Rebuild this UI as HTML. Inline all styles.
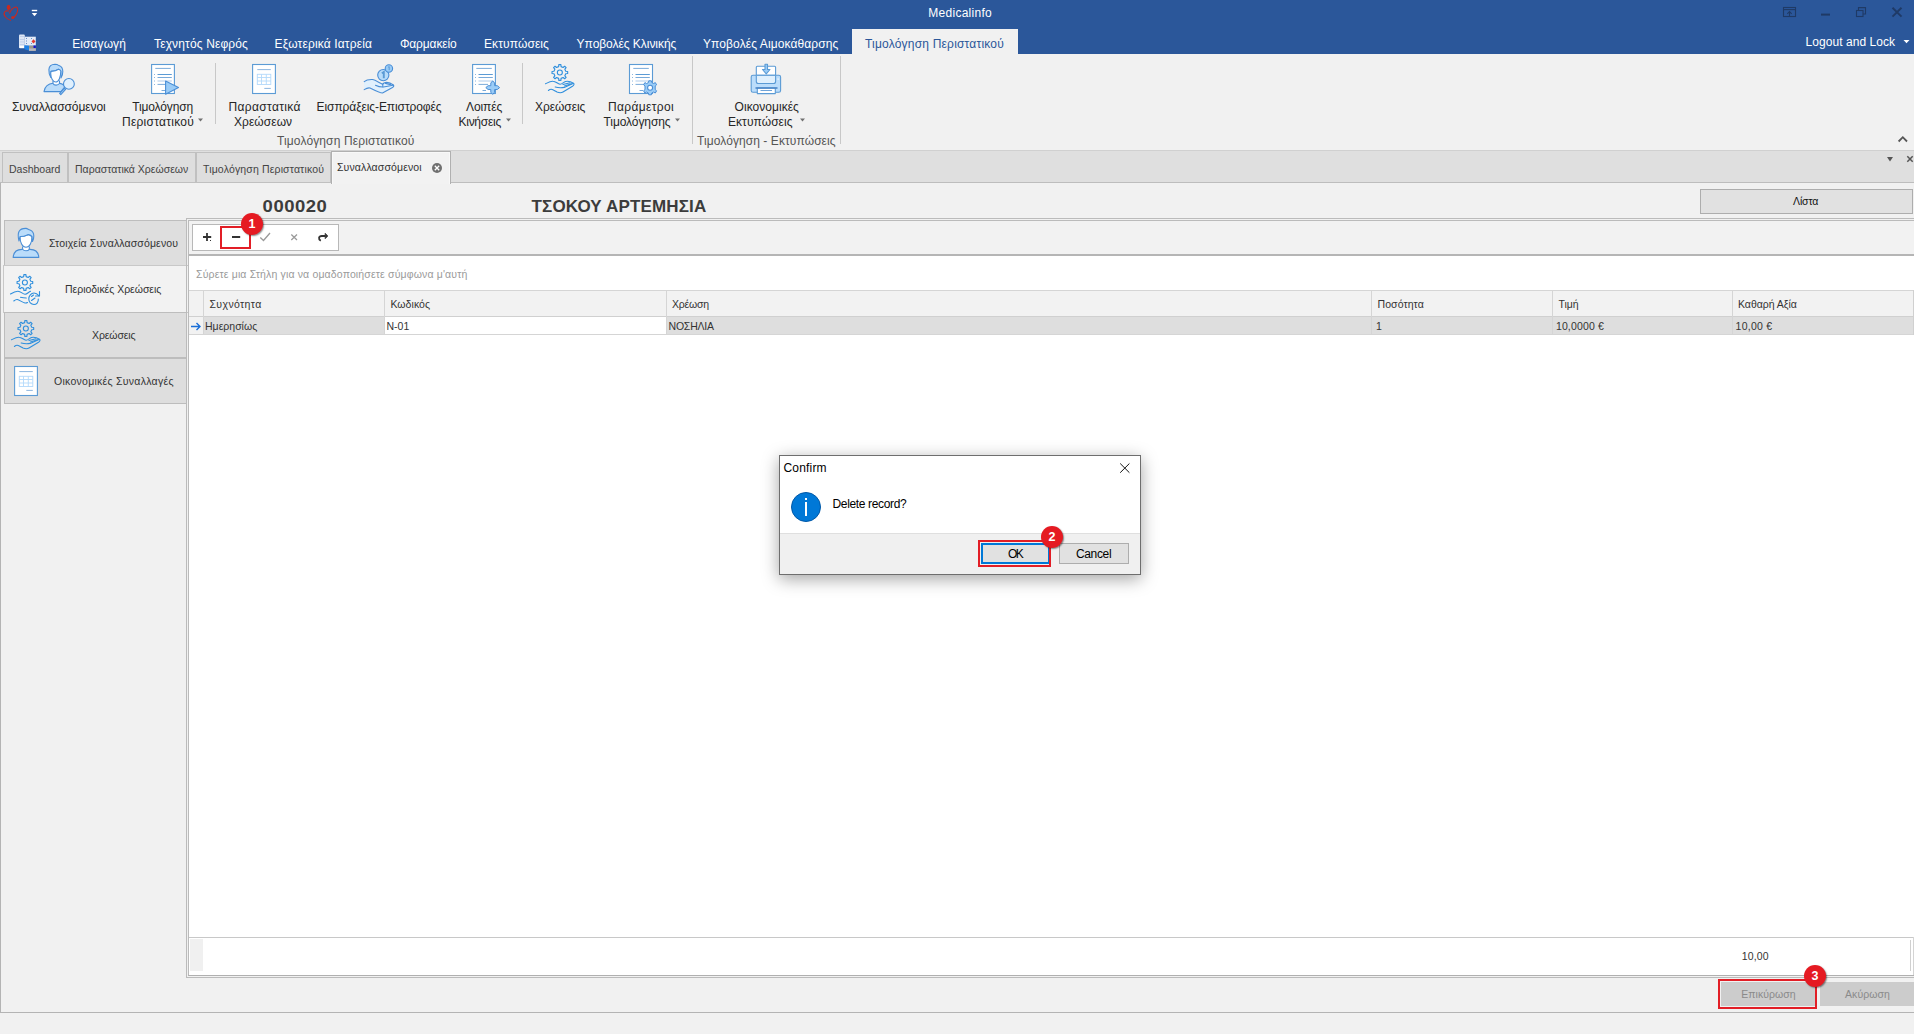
<!DOCTYPE html>
<html><head><meta charset="utf-8">
<style>
*{box-sizing:border-box}
html,body{margin:0;padding:0}
body{width:1914px;height:1034px;position:relative;overflow:hidden;background:#F1F1F1;font-family:"Liberation Sans",sans-serif;color:#222}
.a{position:absolute}
.t{position:absolute;white-space:pre;line-height:1}
.rb{font-size:12px;color:#262626}
.tb{font-size:12px;color:#fff}
.c{font-size:10.5px;color:#333}
svg{position:absolute;overflow:visible}
</style></head><body>

<!-- title bar + ribbon tabs -->
<div class="a" style="left:0;top:0;width:1914px;height:54px;background:#2B579A"></div>
<div class="t tb" style="left:928.3px;top:7px;letter-spacing:0.27px">Medicalinfo</div>
<div class="t tb" style="left:72.3px;top:38px;letter-spacing:0.07px">Εισαγωγή</div>
<div class="t tb" style="left:154px;top:38px;letter-spacing:0.14px">Τεχνητός Νεφρός</div>
<div class="t tb" style="left:274.5px;top:38px;letter-spacing:0.15px">Εξωτερικά Ιατρεία</div>
<div class="t tb" style="left:399.9px;top:38px;letter-spacing:-0.14px">Φαρμακείο</div>
<div class="t tb" style="left:484px;top:38px;letter-spacing:0.1px">Εκτυπώσεις</div>
<div class="t tb" style="left:576.6px;top:38px;letter-spacing:-0.04px">Υποβολές Κλινικής</div>
<div class="t tb" style="left:703px;top:38px;letter-spacing:0.1px">Υποβολές Αιμοκάθαρσης</div>
<div class="a" style="left:852px;top:29px;width:166px;height:26px;background:#F1F1F1"></div>
<div class="t tb" style="left:865px;top:38px;color:#2B579A;letter-spacing:0.2px">Τιμολόγηση Περιστατικού</div>
<div class="t tb" style="left:1805.5px;top:36px;letter-spacing:0.06px">Logout and Lock</div>

<!-- title icons -->
<svg style="left:0;top:0" width="48" height="27" viewBox="0 0 48 27">
 <ellipse cx="8.6" cy="7.4" rx="1.9" ry="2.6" fill="#C62A22"/>
 <path d="M9.2 11.2 C8 10.5 5.5 10.8 4.6 12 C3.8 13.2 4.2 15.5 5.5 17 C7 18.8 9.5 20 11 20.5" fill="none" stroke="#C62A22" stroke-width="1.1"/>
 <path d="M9.5 13.5 C10.5 10.5 12.5 8 15 7.2 C17.5 6.6 18 8.5 17.6 11 C17.2 13.5 15.5 16 13.5 18" fill="none" stroke="#C62A22" stroke-width="1.1"/>
 <circle cx="12.7" cy="17.6" r="1.5" fill="#C62A22"/>
 <rect x="31.8" y="9.8" width="5.4" height="1.4" fill="#fff"/>
 <path d="M31.8 13 L37.2 13 L34.5 16.2 Z" fill="#fff"/>
</svg>
<svg style="left:14px;top:30px" width="28" height="24" viewBox="0 0 28 24">
 <rect x="5" y="4.6" width="5.8" height="13.6" rx="1" fill="#DDE6F5"/><g fill="#B7C6E6"><rect x="5.8" y="6.2" width="4.2" height="0.7"/><rect x="5.8" y="9" width="4.2" height="0.7"/><rect x="5.8" y="11.6" width="4.2" height="0.7"/><rect x="5.8" y="14.2" width="4.2" height="0.7"/></g><rect x="5.6" y="16" width="4.6" height="2" fill="#fff"/>
 <rect x="10.8" y="6.7" width="11" height="9" fill="#E3EBF8"/>
 <g fill="#6C8FC8"><rect x="12" y="8" width="1" height="1"/><rect x="12" y="10.5" width="1" height="1"/><rect x="12" y="13" width="1" height="1"/><rect x="17" y="8" width="1" height="1"/><rect x="17" y="13" width="1" height="1"/></g>
 <path d="M17.5 11.4 L19.5 9.2 L21.5 11.4 L19.5 13.6 Z" fill="#E23A30"/>
 <path d="M10.3 15.2 L15 15.8 L15 20.5 L10.3 19.2 Z" fill="#1C7FE6"/>
 <rect x="15" y="15.8" width="6.8" height="5" fill="#9A958A"/><rect x="15" y="18.5" width="6.8" height="2.3" fill="#B8B8C0"/>
 <rect x="19.5" y="15.5" width="2.3" height="2.5" fill="#1010D0"/>
</svg>
<svg style="left:1783px;top:7px" width="120" height="11" viewBox="0 0 120 11">
 <g fill="none" stroke="#1F3A66" stroke-width="1.1">
  <rect x="0.5" y="0.5" width="12" height="9"/><line x1="0.5" y1="2.6" x2="12.5" y2="2.6"/>
  <path d="M6.5 9.5 V4.8 M4.3 6.8 L6.5 4.6 L8.7 6.8"/>
  <rect x="73.5" y="3.5" width="6.5" height="6"/><path d="M75.5 3.5 V0.6 H82.5 V7 H80"/>
  <path d="M109.5 0.8 L118.5 9.6 M118.5 0.8 L109.5 9.6" stroke-width="1.9"/>
 </g>
 <rect x="38" y="6.6" width="9" height="2" fill="#1F3A66"/>
</svg>
<svg style="left:1903px;top:39px" width="8" height="6" viewBox="0 0 8 6"><path d="M0.5 1 L6.5 1 L3.5 4.2 Z" fill="#fff"/></svg>

<!-- ribbon -->
<!-- ribbon icons -->
<svg style="left:40px;top:60px" width="40" height="38" viewBox="0 0 40 38">
 <g stroke="#4A8ED6" stroke-width="1.1" stroke-linejoin="round">
  <path d="M4 31.6 C4.5 26.5 8.5 23.5 13 23.2 L19 23.2 C22 23.4 24 25 25 26.5 L21 31.6 Z" fill="#BADCFA"/>
  <path d="M13 20.5 L13 23.5 C14 25.6 18 25.6 19.5 23.5 L19.5 20.5" fill="#fff"/>
  <path d="M10.8 17.5 C9.3 15.5 8.8 12.5 8.9 9.5 C9.1 6.5 11.5 4.4 15 4.3 C16.8 4.3 17.8 4.8 19 5.6 C21.5 6.5 22.8 8.5 22.8 11.5 C22.8 14 22.4 16 21 18 L20.8 11 C20 9.8 19.2 9.2 18.5 9.3 C17 10.5 15 11.3 11 11.4 Z" fill="#BADCFA"/>
  <path d="M11 11.4 C15 11.3 17 10.5 18.5 9.3 C19.5 9.6 20.4 10.4 20.8 11 C20.8 17.5 18.5 22 15.8 22 C13 22 10.8 18 10.7 13.5 Z" fill="#fff"/>
  <circle cx="28.9" cy="23.9" r="5.4" fill="#E0F0FD"/>
  <path d="M24.4 28.2 L19.6 33.4 L20.8 34.6 L25.6 29.4 Z" fill="#9ACCF7"/>
 </g>
</svg>
<svg style="left:145px;top:60px" width="40" height="38" viewBox="0 0 40 38">
 <rect x="6.6" y="4.5" width="22.8" height="29" fill="#fff" stroke="#5B9BD5" stroke-width="1.1"/>
 <g stroke="#7AAAD9" stroke-width="1"><line x1="10.3" y1="8.4" x2="25.8" y2="8.4"/><line x1="12.5" y1="14.5" x2="26.8" y2="14.5" stroke="#5B9BD5"/><line x1="12.5" y1="17.5" x2="26.8" y2="17.5"/><line x1="12.5" y1="21" x2="26.8" y2="21" stroke="#AFCBEA"/><line x1="12.5" y1="24.4" x2="22" y2="24.4"/><line x1="16.5" y1="30.5" x2="20.5" y2="30.5"/></g>
 <g fill="#8DB6DF"><rect x="9" y="14" width="1" height="1"/><rect x="9" y="17" width="1" height="1"/><rect x="9" y="20.5" width="1" height="1"/><rect x="9" y="24" width="1" height="1"/></g>
 <path d="M20.6 21 L33.5 27.6 L20.6 34.3 Z" fill="#9ACCF7" stroke="#4A8ED6" stroke-width="1.1" stroke-linejoin="round"/>
</svg>
<svg style="left:244px;top:60px" width="40" height="38" viewBox="0 0 40 38" id="ic-doctab">
 <rect x="8.6" y="4.5" width="22.8" height="29" fill="#fff" stroke="#5B9BD5" stroke-width="1.1"/>
 <g stroke="#8DB6DF" stroke-width="1"><line x1="13.3" y1="9.6" x2="26.8" y2="9.6"/><line x1="20.3" y1="28.4" x2="26.8" y2="28.4"/></g>
 <g stroke="#B3D9FB" stroke-width="0.9" fill="none"><rect x="13.3" y="14.3" width="13.5" height="10.2"/><line x1="13.3" y1="17.5" x2="26.8" y2="17.5"/><line x1="13.3" y1="21" x2="26.8" y2="21"/><line x1="17.5" y1="14.3" x2="17.5" y2="24.5"/><line x1="22.3" y1="14.3" x2="22.3" y2="24.5"/></g>
</svg>
<svg style="left:360px;top:60px" width="40" height="38" viewBox="0 0 40 38">
 <path d="M4 21.5 C6 20 8 19.3 12.5 19.5 C15 19.8 19 22.5 22.5 24.2 L24 23 C26 22 30 22.5 33.5 25 C34 26 33.5 27 32.5 27.5 L22.5 33 C20 33 14 30 10 28 C8 27.5 6 28.5 4 29.5 Z" fill="#E0F0FD"/>
 <g stroke="#4A8ED6" stroke-width="1.1" stroke-linejoin="round" fill="none" stroke-linecap="round">
  <path d="M4.2 21.6 C6 20 8 19.3 12.5 19.5 C15 19.8 19 22.5 22.5 24.2 L24 23 C26 22 30 22.5 33.5 25 C34 26 33.5 27 32.5 27.5 L22.5 33 C20 33 14 30 10 28 C8 27.5 6 28.5 4.2 29.6"/>
  <path d="M15.5 25.2 C18 26.5 20 27.2 23.5 27 L33 25.3"/>
  <path d="M22.8 24.3 V26.8 M25.5 23.4 L30.5 24.6"/>
 </g>
 <g stroke="#4A8ED6" stroke-width="1.1">
  <circle cx="23.3" cy="15.1" r="5.6" fill="#B8DCFA"/>
  <circle cx="28.9" cy="8.5" r="3.7" fill="#9ACCF7"/>
 </g>
 <path d="M21.8 13.2 L23.8 12 L23.8 18.3" stroke="#5B9BD5" stroke-width="1.9" fill="none"/>
 <path d="M28.2 7.2 L29.2 6.6 V10.2" stroke="#5B9BD5" stroke-width="1" fill="none"/>
</svg>
<svg style="left:466px;top:60px" width="40" height="38" viewBox="0 0 40 38">
 <rect x="6.6" y="4.5" width="22.8" height="29" fill="#fff" stroke="#5B9BD5" stroke-width="1.1"/>
 <g stroke="#7AAAD9" stroke-width="1"><line x1="10.3" y1="8.4" x2="25.8" y2="8.4"/><line x1="12.5" y1="14.5" x2="26.8" y2="14.5" stroke="#5B9BD5"/><line x1="12.5" y1="17.5" x2="26.8" y2="17.5"/><line x1="12.5" y1="21" x2="26.8" y2="21" stroke="#AFCBEA"/><line x1="12.5" y1="24.4" x2="22" y2="24.4"/><line x1="16.5" y1="30.5" x2="20" y2="30.5"/></g>
 <g fill="#8DB6DF"><rect x="9" y="14" width="1" height="1"/><rect x="9" y="17" width="1" height="1"/><rect x="9" y="20.5" width="1" height="1"/><rect x="9" y="24" width="1" height="1"/></g>
 <path d="M26.7 20.8 L28.6 23 V25.7 H31.3 L33.6 27.6 L31.3 29.5 H28.6 V32.2 L26.7 34.4 L24.8 32.2 V29.5 H22.1 L19.8 27.6 L22.1 25.7 H24.8 V23 Z" fill="#9ACCF7" stroke="#4A8ED6" stroke-width="1" stroke-linejoin="round"/>
</svg>
<svg style="left:540px;top:60px" width="40" height="38" viewBox="0 0 40 38" id="ic-gearhand">
 <g fill="none" stroke="#2F8FDD" stroke-width="1.1" stroke-linejoin="round" stroke-linecap="round">
  <path id="gearp" d="M18.63 6.62 L18.80 4.67 L20.90 4.67 L21.07 6.62 L23.14 7.49 L24.64 6.22 L26.13 7.71 L24.86 9.21 L25.73 11.28 L27.68 11.45 L27.68 13.55 L25.73 13.72 L24.86 15.79 L26.13 17.29 L24.64 18.78 L23.14 17.51 L21.07 18.38 L20.90 20.33 L18.80 20.33 L18.63 18.38 L16.56 17.51 L15.06 18.78 L13.57 17.29 L14.84 15.79 L13.97 13.72 L12.02 13.55 L12.02 11.45 L13.97 11.28 L14.84 9.21 L13.57 7.71 L15.06 6.22 L16.56 7.49 Z"/>
  <circle cx="19.85" cy="12.5" r="2.5"/>
  <path d="M5.5 23.8 C8 22.5 10.5 21 13 21.2 C16 21.3 17.5 23.9 20 24.2 C22 24.4 23.5 22 25.5 21.5 C28 21 31.5 22 33.5 23.2 C34.5 24 34 25.2 32.5 26.2 L23 32 C21 33.2 19.5 33 17 32 C15 31 13 29.5 11.3 29.3 C10 29.2 9 30 8.4 30.5"/>
  <path d="M15.2 27 C18 27.8 21 28 24.2 27.4 L33 23.5"/>
  <path d="M23 24.5 L30 22.8 M24.5 26 L31.5 23.8"/>
 </g>
</svg>
<svg style="left:622px;top:60px" width="40" height="38" viewBox="0 0 40 38">
 <rect x="7.5" y="4.5" width="23" height="29" fill="#fff" stroke="#5B9BD5" stroke-width="1.1"/>
 <g stroke="#7AAAD9" stroke-width="1"><line x1="11.3" y1="8.4" x2="26.8" y2="8.4"/><line x1="13.5" y1="14.5" x2="27.8" y2="14.5" stroke="#5B9BD5"/><line x1="13.5" y1="17.5" x2="27.8" y2="17.5"/><line x1="13.5" y1="21" x2="27.8" y2="21" stroke="#AFCBEA"/><line x1="13.5" y1="24.4" x2="22" y2="24.4"/><line x1="17.5" y1="30.5" x2="21" y2="30.5"/></g>
 <g fill="#8DB6DF"><rect x="10" y="14" width="1" height="1"/><rect x="10" y="17" width="1" height="1"/><rect x="10" y="20.5" width="1" height="1"/><rect x="10" y="24" width="1" height="1"/></g>
 <path d="M26.8 20.8 H29.4 L29.8 22.6 L31.6 23.5 L33.3 22.6 L34.6 24.8 L33.2 26 V29.6 L34.6 30.8 L33.3 33 L31.6 32.1 L29.8 33 L29.4 34.8 H26.8 L26.4 33 L24.6 32.1 L22.9 33 L21.6 30.8 L23 29.6 V26 L21.6 24.8 L22.9 22.6 L24.6 23.5 L26.4 22.6 Z" fill="#9ACCF7" stroke="#4A8ED6" stroke-width="1" stroke-linejoin="round"/>
 <circle cx="28.1" cy="27.8" r="2.5" fill="#fff" stroke="#4A8ED6" stroke-width="1.1"/>
</svg>
<svg style="left:746px;top:60px" width="40" height="38" viewBox="0 0 40 38">
 <g stroke="#5B9BD5" stroke-width="1.1" stroke-linejoin="round">
  <rect x="10.3" y="6.3" width="19.3" height="12" rx="1" fill="#fff"/>
  <rect x="5.2" y="15.3" width="29.4" height="17" rx="1.8" fill="#BBDDFB"/>
  <path d="M10.3 15.3 V21.5 C10.3 22.8 11 23.5 12.3 23.5 H27.6 C28.9 23.5 29.6 22.8 29.6 21.5 V15.3" fill="#E0F0FD"/>
  <line x1="10.3" y1="15.3" x2="29.6" y2="15.3"/>
  <rect x="11.3" y="28" width="18" height="5.6" fill="#fff"/>
  <path d="M19 4.2 H21.5 V9.5 H24 L20.25 13.8 L16.5 9.5 H19 Z" fill="#9ACCF7"/>
 </g>
 <line x1="9.5" y1="28" x2="31.5" y2="28" stroke="#4A86C8" stroke-width="1.6"/>
 <line x1="14.5" y1="30.5" x2="26" y2="30.5" stroke="#6FA3D8" stroke-width="1"/>
 <rect x="31.5" y="18.5" width="1.2" height="1.2" fill="#fff"/>
</svg>
<!-- dropdown arrows ribbon -->
<svg style="left:0;top:54px" width="900" height="96" viewBox="0 0 900 96">
 <g fill="#707070"><path d="M198 64.5 H203 L200.5 67.5 Z"/><path d="M506 64.5 H511 L508.5 67.5 Z"/><path d="M675 64.5 H680 L677.5 67.5 Z"/><path d="M800 64.5 H805 L802.5 67.5 Z"/></g>
</svg>
<svg style="left:1896px;top:134px" width="14" height="10" viewBox="0 0 14 10"><path d="M2.6 7.5 L6.8 3.2 L11 7.5" fill="none" stroke="#555" stroke-width="1.8"/></svg>

<div class="t rb" style="left:12px;top:101px;letter-spacing:-0.07px">Συναλλασσόμενοι</div>
<div class="t rb" style="left:132.2px;top:101px;letter-spacing:-0.12px">Τιμολόγηση</div>
<div class="t rb" style="left:122px;top:116px;letter-spacing:0.26px">Περιστατικού</div>
<div class="a" style="left:215px;top:63px;width:1px;height:61px;background:#C8C8C8"></div>
<div class="t rb" style="left:228.5px;top:101px;letter-spacing:0.34px">Παραστατικά</div>
<div class="t rb" style="left:234px;top:116px;letter-spacing:0.06px">Χρεώσεων</div>
<div class="t rb" style="left:316.6px;top:101px;letter-spacing:-0.09px">Εισπράξεις-Επιστροφές</div>
<div class="t rb" style="left:466px;top:101px;letter-spacing:-0.08px">Λοιπές</div>
<div class="t rb" style="left:458.5px;top:116px;letter-spacing:-0.27px">Κινήσεις</div>
<div class="a" style="left:522px;top:63px;width:1px;height:61px;background:#C8C8C8"></div>
<div class="t rb" style="left:535px;top:101px;letter-spacing:-0.06px">Χρεώσεις</div>
<div class="t rb" style="left:608px;top:101px;letter-spacing:0.34px">Παράμετροι</div>
<div class="t rb" style="left:603.5px;top:116px;letter-spacing:-0.08px">Τιμολόγησης</div>
<div class="t rb" style="left:277px;top:135px;color:#555;letter-spacing:0.13px">Τιμολόγηση Περιστατικού</div>
<div class="a" style="left:692px;top:56px;width:1px;height:88px;background:#C8C8C8"></div>
<div class="t rb" style="left:734.6px;top:101px;letter-spacing:0.04px">Οικονομικές</div>
<div class="t rb" style="left:728px;top:116px;letter-spacing:0.06px">Εκτυπώσεις</div>
<div class="t rb" style="left:697px;top:135px;color:#555;letter-spacing:0.08px">Τιμολόγηση - Εκτυπώσεις</div>
<div class="a" style="left:840px;top:56px;width:1px;height:88px;background:#C8C8C8"></div>

<!-- doc tab strip -->
<div class="a" style="left:0;top:150px;width:1914px;height:33px;background:#DFDFDF;border-top:1px solid #D0D0D0;border-bottom:1px solid #BDBDBD"></div>
<div class="a" style="left:2px;top:152px;width:66px;height:31px;background:#DEDEDE;border:1px solid #C0C0C0"></div>
<div class="a" style="left:68px;top:152px;width:128px;height:31px;background:#DEDEDE;border:1px solid #C0C0C0"></div>
<div class="a" style="left:196px;top:152px;width:135px;height:31px;background:#DEDEDE;border:1px solid #C0C0C0"></div>
<div class="a" style="left:331px;top:151px;width:120px;height:33px;background:#F2F2F2;border:1px solid #B0B0B0;border-bottom:none;box-shadow:inset 1px 1px 0 #F8F8F8, inset -1px 0 0 #F8F8F8"></div>
<div class="t c" style="left:9px;top:164px;color:#444">Dashboard</div>
<div class="t c" style="left:75px;top:164px;color:#444">Παραστατικά Χρεώσεων</div>
<div class="t c" style="left:203px;top:164px;color:#444;letter-spacing:0.15px">Τιμολόγηση Περιστατικού</div>
<div class="t c" style="left:337px;top:162px;color:#333;letter-spacing:0.12px">Συναλλασσόμενοι</div>
<svg style="left:431px;top:162px" width="12" height="12" viewBox="0 0 12 12"><circle cx="6" cy="6" r="5" fill="#707070"/><path d="M3.8 3.8 L8.2 8.2 M8.2 3.8 L3.8 8.2" stroke="#fff" stroke-width="1.3"/></svg>
<svg style="left:1885px;top:154px" width="30" height="12" viewBox="0 0 30 12"><path d="M2 3 H8 L5 7.5 Z" fill="#555"/><path d="M22.3 2.3 L27.7 7.7 M27.7 2.3 L22.3 7.7" stroke="#555" stroke-width="1.5"/></svg>

<!-- content frame -->
<div class="a" style="left:0;top:183px;width:1914px;height:830px;border-left:1px solid #B4B4B4;border-bottom:1px solid #B4B4B4"></div>

<div class="t" style="left:262.6px;top:198px;font-size:18.5px;font-weight:bold;color:#3C3C3C;letter-spacing:0.5px;transform:scaleY(0.9);transform-origin:0 0">000020</div>
<div class="t" style="left:531.5px;top:198px;font-size:17px;font-weight:bold;color:#3C3C3C;letter-spacing:0.15px">ΤΣΟΚΟΥ ΑΡΤΕΜΗΣΙΑ</div>
<div class="a" style="left:1700px;top:189px;width:213px;height:25px;background:#E1E1E1;border:1px solid #ADADAD"></div>
<div class="t c" style="left:1793px;top:196px;color:#111;letter-spacing:-0.12px">Λίστα</div>

<!-- nav -->
<div class="a" style="left:4px;top:220px;width:183px;height:46px;background:#DEDEDE;border:1px solid #BDBDBD"></div>
<div class="a" style="left:3px;top:265px;width:185px;height:48px;background:#F2F2F2;border:1px solid #C8C8C8;border-right:none"></div>
<div class="a" style="left:4px;top:312px;width:183px;height:46px;background:#DEDEDE;border:1px solid #BDBDBD"></div>
<div class="a" style="left:4px;top:358px;width:183px;height:46px;background:#DEDEDE;border:1px solid #BDBDBD"></div>
<div class="t c" style="left:49px;top:238px;letter-spacing:0.13px">Στοιχεία Συναλλασσόμενου</div>
<div class="t c" style="left:65px;top:284px;letter-spacing:-0.03px">Περιοδικές Χρεώσεις</div>
<div class="t c" style="left:92px;top:330px;letter-spacing:-0.11px">Χρεώσεις</div>
<div class="t c" style="left:54px;top:376px;letter-spacing:0.27px">Οικονομικές Συναλλαγές</div>


<!-- nav icons -->
<svg style="left:8px;top:224px" width="36" height="38" viewBox="0 0 36 38">
 <g stroke="#4A8ED6" stroke-width="1.1" stroke-linejoin="round">
  <path d="M5.2 33.4 C5.5 28.5 9 25.5 14 25.4 L22 25.4 C27 25.5 30.5 28.5 30.8 33.4 Z" fill="#BADCFA"/>
  <path d="M14.6 22.5 L14.6 25.2 C16 27.3 20 27.3 21.3 25.2 L21.3 22.5" fill="#fff"/>
  <path d="M12 12.5 C12 19 14.5 23.3 18 23.3 C21.5 23.3 24 19 24 12.5 C22 10.5 20.5 9.8 18.5 11.2 C16.5 12.3 14.5 12.6 12 12.5 Z" fill="#fff"/>
  <path d="M11 17 C10 13 10 9.5 11 7.5 C12.5 4.8 15 4.3 18 4.4 C19.5 4.6 20.5 5.6 22 6 C24.5 7 25.8 9.5 25.8 12 C25.8 14.5 25.3 16 24.5 17.5 L24 12.5 C22 10.5 20.5 9.8 18.5 11.2 C16.5 12.3 14.5 12.6 12 12.5 Z" fill="#BADCFA"/>
 </g>
</svg>
<svg style="left:6px;top:270px" width="38" height="38" viewBox="0 0 38 38">
 <g fill="none" stroke="#2F8FDD" stroke-width="1.1" stroke-linejoin="round" stroke-linecap="round">
  <g transform="translate(-0.95 0)"><path d="M18.63 6.62 L18.80 4.67 L20.90 4.67 L21.07 6.62 L23.14 7.49 L24.64 6.22 L26.13 7.71 L24.86 9.21 L25.73 11.28 L27.68 11.45 L27.68 13.55 L25.73 13.72 L24.86 15.79 L26.13 17.29 L24.64 18.78 L23.14 17.51 L21.07 18.38 L20.90 20.33 L18.80 20.33 L18.63 18.38 L16.56 17.51 L15.06 18.78 L13.57 17.29 L14.84 15.79 L13.97 13.72 L12.02 13.55 L12.02 11.45 L13.97 11.28 L14.84 9.21 L13.57 7.71 L15.06 6.22 L16.56 7.49 Z"/>
  <circle cx="19.85" cy="12.5" r="2.5"/></g>
  <path d="M4.5 24 C7 22.5 9.5 21.2 12 21.3 C15 21.4 16.5 24 19 24.3 C21 24.5 22.5 22 24.5 21.3"/>
  <path d="M14.5 27.3 C16.5 27.8 18.5 28 20.3 28"/>
  <path d="M7.8 31 C9 30 10 29.3 11.3 29.5 C13.5 30 16.5 32.5 19 33 C20 33.2 21 32.8 21.5 32.5"/>
  <path d="M32.3 29 C32.5 32.5 30.5 34.5 28 34.5 C25 34.5 22.8 32 22.8 29 C22.8 26 25 23 28 23 C30 23 31.5 24 33 25.8"/>
  <path d="M33.5 21.5 V26 H29.5"/>
  <path d="M25.5 26.5 L27.5 25 M25.5 30.5 L29 28"/>
 </g>
</svg>
<svg style="left:6px;top:316px" width="40" height="38" viewBox="0 0 40 38">
 <g fill="none" stroke="#2F8FDD" stroke-width="1.1" stroke-linejoin="round" stroke-linecap="round">
  <path d="M18.63 6.62 L18.80 4.67 L20.90 4.67 L21.07 6.62 L23.14 7.49 L24.64 6.22 L26.13 7.71 L24.86 9.21 L25.73 11.28 L27.68 11.45 L27.68 13.55 L25.73 13.72 L24.86 15.79 L26.13 17.29 L24.64 18.78 L23.14 17.51 L21.07 18.38 L20.90 20.33 L18.80 20.33 L18.63 18.38 L16.56 17.51 L15.06 18.78 L13.57 17.29 L14.84 15.79 L13.97 13.72 L12.02 13.55 L12.02 11.45 L13.97 11.28 L14.84 9.21 L13.57 7.71 L15.06 6.22 L16.56 7.49 Z"/>
  <circle cx="19.85" cy="12.5" r="2.5"/>
  <path d="M5.5 23.8 C8 22.5 10.5 21 13 21.2 C16 21.3 17.5 23.9 20 24.2 C22 24.4 23.5 22 25.5 21.5 C28 21 31.5 22 33.5 23.2 C34.5 24 34 25.2 32.5 26.2 L23 32 C21 33.2 19.5 33 17 32 C15 31 13 29.5 11.3 29.3 C10 29.2 9 30 8.4 30.5"/>
  <path d="M15.2 27 C18 27.8 21 28 24.2 27.4 L33 23.5"/>
  <path d="M23 24.5 L30 22.8 M24.5 26 L31.5 23.8"/>
 </g>
</svg>
<svg style="left:6px;top:362px" width="40" height="38" viewBox="0 0 40 38">
 <rect x="8.6" y="4.5" width="22.8" height="29" fill="#fff" stroke="#5B9BD5" stroke-width="1.1"/>
 <g stroke="#8DB6DF" stroke-width="1"><line x1="13.3" y1="9.6" x2="26.8" y2="9.6"/><line x1="20.3" y1="28.4" x2="26.8" y2="28.4"/></g>
 <g stroke="#B3D9FB" stroke-width="0.9" fill="none"><rect x="13.3" y="14.3" width="13.5" height="10.2"/><line x1="13.3" y1="17.5" x2="26.8" y2="17.5"/><line x1="13.3" y1="21" x2="26.8" y2="21"/><line x1="17.5" y1="14.3" x2="17.5" y2="24.5"/><line x1="22.3" y1="14.3" x2="22.3" y2="24.5"/></g>
</svg>

<!-- grid panel -->
<div class="a" style="left:186px;top:218px;width:1728px;height:760px;border:1px solid #BBBBBB;border-right:none"></div>
<div class="a" style="left:188px;top:220px;width:1726px;height:756px;border:1px solid #BBBBBB;border-right:none;border-bottom:2px solid #B0B0B0;background:#F2F2F2"></div>
<div class="a" style="left:189px;top:254px;width:1725px;height:2px;background:#B5B5B5"></div>
<div class="a" style="left:189px;top:256px;width:1725px;height:719px;background:#FFFFFF"></div>
<!-- toolbar -->
<div class="a" style="left:192px;top:224px;width:147px;height:27px;background:#FFFFFF;border:1px solid #B8B8B8"></div>


<!-- toolbar icons -->
<svg style="left:190px;top:224px" width="150" height="28" viewBox="0 0 150 28">
 <g stroke="#333" stroke-width="1.8" fill="none"><path d="M17 9 V17 M13 13 H21.2"/><path d="M42 13 H50.2" stroke-width="2"/><path d="M135.5 12 H131.8 C128.6 12 128 15.2 130.8 16.8" /></g>
 <rect x="20" y="16" width="1" height="1" fill="#333"/>
 <path d="M135.2 9.3 L137.8 12 L135.2 14.7 Z" fill="#333" stroke="#333" stroke-width="0.8" stroke-linejoin="round"/>
 <path d="M70.3 13.5 L73.5 16.5 L80 9" stroke="#9A9A9A" stroke-width="1.3" fill="none"/>
 <path d="M101.3 10.5 L107 16 M107 10.5 L101.3 16" stroke="#9A9A9A" stroke-width="1.3" fill="none"/>
</svg>
<div class="t c" style="left:196px;top:269px;color:#9A9A9A;letter-spacing:0.15px">Σύρετε μια Στήλη για να ομαδοποιήσετε σύμφωνα μ'αυτή</div>
<!-- header -->
<div class="a" style="left:189px;top:290px;width:1725px;height:27px;background:#F2F2F2;border-top:1px solid #D5D5D5;border-bottom:1px solid #D0D0D0"></div>
<div class="a" style="left:189px;top:317px;width:1725px;height:18px;background:#DEDEDE;border-bottom:1px solid #D5D5D5"></div>
<div class="a" style="left:384px;top:317px;width:282px;height:17px;background:#FFFFFF"></div>
<div class="a" style="left:189px;top:317px;width:14px;height:17px;background:#F2F2F2"></div>
<svg style="left:189px;top:320px" width="14" height="13" viewBox="0 0 14 13"><path d="M2 6.5 H11 M7.5 3 L11 6.5 L7.5 10" fill="none" stroke="#1A6FD8" stroke-width="1.4"/></svg>
<div class="a" style="left:203px;top:290px;width:1px;height:45px;background:#D5D5D5"></div>
<div class="a" style="left:384px;top:290px;width:1px;height:45px;background:#D5D5D5"></div>
<div class="a" style="left:666px;top:290px;width:1px;height:45px;background:#D5D5D5"></div>
<div class="a" style="left:1371px;top:290px;width:1px;height:45px;background:#D5D5D5"></div>
<div class="a" style="left:1552px;top:290px;width:1px;height:45px;background:#D5D5D5"></div>
<div class="a" style="left:1732px;top:290px;width:1px;height:45px;background:#D5D5D5"></div>
<div class="a" style="left:1913px;top:290px;width:1px;height:45px;background:#D0D0D0"></div>
<div class="t c" style="left:209.5px;top:299px;letter-spacing:0.38px">Συχνότητα</div>
<div class="t c" style="left:390.4px;top:299px;letter-spacing:0.07px">Κωδικός</div>
<div class="t c" style="left:672px;top:299px;letter-spacing:-0.2px">Χρέωση</div>
<div class="t c" style="left:1377.5px;top:299px;letter-spacing:0.09px">Ποσότητα</div>
<div class="t c" style="left:1558.6px;top:299px;letter-spacing:-0.1px">Τιμή</div>
<div class="t c" style="left:1738px;top:299px;letter-spacing:-0.03px">Καθαρή Αξία</div>
<div class="t c" style="left:205px;top:321px">Ημερησίως</div>
<div class="t c" style="left:386.5px;top:321px">N-01</div>
<div class="t c" style="left:668.5px;top:321px;letter-spacing:-0.2px">ΝΟΣΗΛΙΑ</div>
<div class="t c" style="left:1376px;top:321px">1</div>
<div class="t c" style="left:1555.9px;top:321px;letter-spacing:0.15px">10,0000 €</div>
<div class="t c" style="left:1735.6px;top:321px;letter-spacing:0.23px">10,00 €</div>

<!-- footer -->
<div class="a" style="left:189px;top:937px;width:1725px;height:1px;background:#C8C8C8"></div>
<div class="a" style="left:190px;top:939px;width:13px;height:32px;background:#F0F0F0"></div>
<div class="a" style="left:1910px;top:940px;width:1px;height:31px;background:#D0D0D0"></div>
<div class="a" style="left:1913px;top:937px;width:1px;height:38px;background:#D4D4D4"></div>
<div class="t c" style="left:1741.8px;top:951px;letter-spacing:0.1px">10,00</div>

<!-- bottom buttons -->
<div class="a" style="left:1721px;top:982px;width:95px;height:24px;background:#CCCCCC"></div>
<div class="t c" style="left:1741.3px;top:989px;color:#8A8A8A;letter-spacing:0.04px">Επικύρωση</div>
<div class="a" style="left:1820px;top:982px;width:94px;height:24px;background:#CCCCCC"></div>
<div class="t c" style="left:1845px;top:989px;color:#8A8A8A;letter-spacing:0.07px">Ακύρωση</div>
<div class="a" style="left:1718px;top:979px;width:99px;height:30px;border:2px solid #E21E26"></div>

<!-- dialog -->
<div class="a" style="left:779px;top:455px;width:362px;height:120px;background:#FFFFFF;border:1px solid #6E6E6E;box-shadow:0 4px 16px rgba(0,0,0,0.36)"></div>
<div class="a" style="left:780px;top:533px;width:360px;height:41px;background:#F0F0F0;border-top:1px solid #DFDFDF"></div>
<div class="t" style="left:783.5px;top:462px;font-size:12px;color:#000;letter-spacing:0.18px">Confirm</div>
<div class="t" style="left:832.5px;top:498px;font-size:12px;color:#000;letter-spacing:-0.35px">Delete record?</div>
<div class="a" style="left:791px;top:492px;width:30px;height:30px;border-radius:50%;background:#0078D7;border:1px solid #0058A8"></div>
<div class="a" style="left:805px;top:498px;width:2px;height:2px;background:#fff"></div>
<div class="a" style="left:805px;top:502px;width:2px;height:14px;background:#fff"></div>
<svg style="left:1119px;top:462px" width="12" height="12" viewBox="0 0 12 12"><path d="M1.2 1.5 L10.4 10.7 M10.4 1.5 L1.2 10.7" stroke="#111" stroke-width="1"/></svg>
<div class="a" style="left:981px;top:543px;width:69px;height:21px;background:#E1E1E1;border:2px solid #0078D7"></div>
<div class="t" style="left:1008px;top:548px;font-size:12px;color:#000;letter-spacing:-1.5px">OK</div>
<div class="a" style="left:1059px;top:543px;width:70px;height:21px;background:#E1E1E1;border:1px solid #ADADAD"></div>
<div class="t" style="left:1076px;top:548px;font-size:12px;color:#000;letter-spacing:-0.36px">Cancel</div>
<div class="a" style="left:978px;top:540px;width:73px;height:27px;border:2px solid #E21E26"></div>

<!-- red box toolbar -->
<div class="a" style="left:220px;top:226px;width:31px;height:23px;border:2px solid #E21E26"></div>

<!-- badges -->
<div class="a" style="left:241px;top:213px;width:22px;height:22px;border-radius:50%;background:#E51A22;box-shadow:1px 1px 1.5px rgba(0,0,0,.45);color:#fff;font:bold 12.5px/22px 'Liberation Sans',sans-serif;text-align:center">1</div>
<div class="a" style="left:1041px;top:526px;width:22px;height:22px;border-radius:50%;background:#E51A22;box-shadow:1px 1px 1.5px rgba(0,0,0,.45);color:#fff;font:bold 12.5px/22px 'Liberation Sans',sans-serif;text-align:center">2</div>
<div class="a" style="left:1804px;top:965px;width:22px;height:22px;border-radius:50%;background:#E51A22;box-shadow:1px 1px 1.5px rgba(0,0,0,.45);color:#fff;font:bold 12.5px/22px 'Liberation Sans',sans-serif;text-align:center">3</div>

</body></html>
